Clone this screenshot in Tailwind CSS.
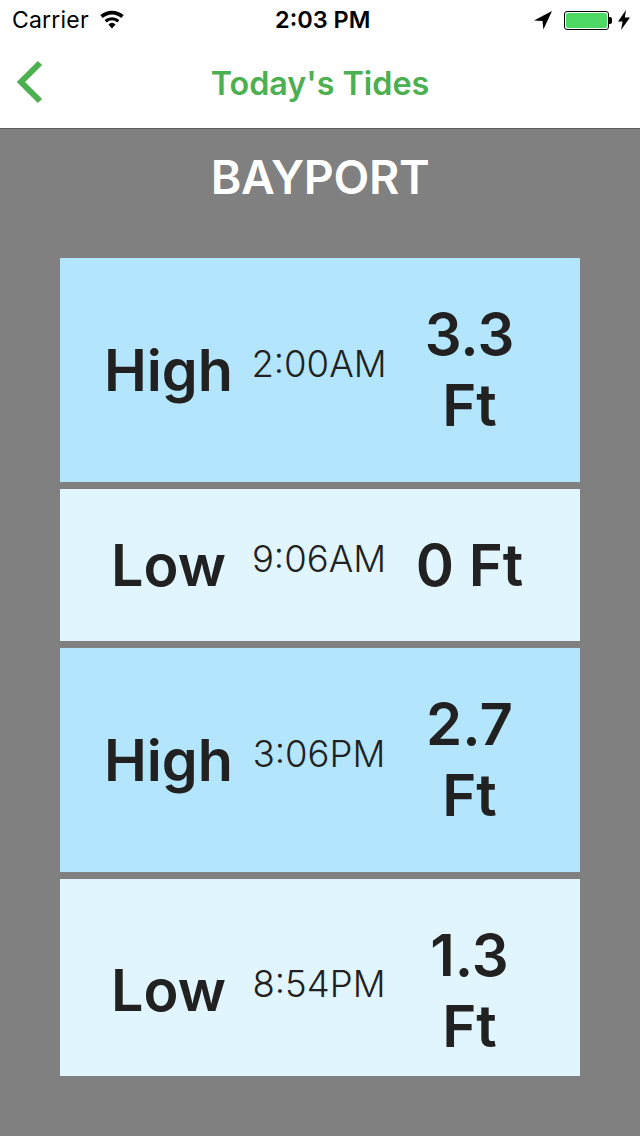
<!DOCTYPE html>
<html lang="en">
<head>
  <meta charset="UTF-8">
  <meta name="viewport" content="width=device-width, initial-scale=1.0">
  <title>Today's Tides</title>
  <script src="https://cdn.jsdelivr.net/npm/@tailwindcss/browser@4"></script>
</head>
<body class="bg-[#808080] font-['Inter',sans-serif] text-[#212121]">
  <div class="w-[640px] h-[1136px] overflow-hidden flex flex-col">
    <!-- Status bar -->
    <div class="bg-white h-[40px] relative flex items-center justify-between pl-[12px] pr-[10px] text-black">
      <div class="flex items-center gap-[10px]">
        <span class="text-[23px] leading-none tracking-[0.2px]">Carrier</span>
        <svg width="26" height="20" viewBox="0 0 26 20" fill="black"><path d="M13 18.5 9.4 14.4a5.4 5.4 0 0 1 7.2 0Z"/><path d="M7.7 12.4 5.6 10a11 11 0 0 1 14.8 0l-2.1 2.4a7.9 7.9 0 0 0-10.6 0Z"/><path d="M3.9 8.1 1.3 5.2a17.3 17.3 0 0 1 23.4 0l-2.6 2.9a13.4 13.4 0 0 0-18.2 0Z"/></svg>
      </div>
      <span class="absolute left-[275px] text-[23.5px] font-semibold leading-none">2:03 PM</span>
      <div class="flex items-center">
        <svg width="20" height="20" viewBox="0 0 20 20" fill="black" class="mr-[11px]"><path d="M19 1 1 10.5l8.5.6.9 8.4Z"/></svg>
        <div class="w-[45px] h-[19px] border border-black rounded-[3px] p-[1px]"><div class="w-full h-full bg-[#4cd964] rounded-[2px]"></div></div>
        <div class="w-[3px] h-[7px] bg-black rounded-r-[2px] mr-[6px]"></div>
        <svg width="12" height="20" viewBox="0 0 12 20" fill="black"><path d="M8 0 0 11.5h4.6L3 20l9-12.5H6.8Z"/></svg>
      </div>
    </div>

    <!-- Nav bar -->
    <div class="bg-white h-[89px] relative flex items-center justify-center border-b border-[#5c5c5c]">
      <svg width="30" height="44" viewBox="0 0 30 44" fill="none" stroke="#4caf50" stroke-width="6" class="absolute left-[15px] top-[20px]"><path d="M25 3 6 22l19 19"/></svg>
      <h1 class="text-[32.3px] font-semibold text-[#4caf50] leading-none">Today's Tides</h1>
    </div>

    <h2 class="text-center text-white text-[46.5px] font-semibold tracking-[-0.3px] leading-none mt-[25px] mb-[57.5px]">BAYPORT</h2>

    <!-- Tide rows -->
    <div class="mx-[60px] flex flex-col gap-[7px]">
      <div class="h-[224px] bg-[#b3e5fc] pl-[33px] grid grid-cols-[151px_151px_151px] items-center text-center">
        <div class="text-[57.5px] font-semibold">High</div>
        <div class="text-[36.5px] font-[350] -mt-[12px] -ml-[1px]">2:00AM</div>
        <div class="text-[58px] font-semibold leading-[71px] -ml-[2px]">3.3<br>Ft</div>
      </div>
      <div class="h-[152px] bg-[#e1f5fe] pl-[33px] grid grid-cols-[151px_151px_151px] items-center text-center">
        <div class="text-[57.5px] font-semibold">Low</div>
        <div class="text-[36.5px] font-[350] -mt-[12px] -ml-[1px]">9:06AM</div>
        <div class="text-[58px] font-semibold leading-[71px] -ml-[2px]">0 Ft</div>
      </div>
      <div class="h-[224px] bg-[#b3e5fc] pl-[33px] grid grid-cols-[151px_151px_151px] items-center text-center">
        <div class="text-[57.5px] font-semibold">High</div>
        <div class="text-[36.5px] font-[350] -mt-[12px] -ml-[1px]">3:06PM</div>
        <div class="text-[58px] font-semibold leading-[71px] -ml-[2px]">2.7<br>Ft</div>
      </div>
      <div class="h-[197px] bg-[#e1f5fe] pt-[26px] pl-[33px] grid grid-cols-[151px_151px_151px] items-center text-center">
        <div class="text-[57.5px] font-semibold">Low</div>
        <div class="text-[36.5px] font-[350] -mt-[12px] -ml-[1px]">8:54PM</div>
        <div class="text-[58px] font-semibold leading-[71px] -ml-[2px]">1.3<br>Ft</div>
      </div>
    </div>
  </div>
</body>
</html>
